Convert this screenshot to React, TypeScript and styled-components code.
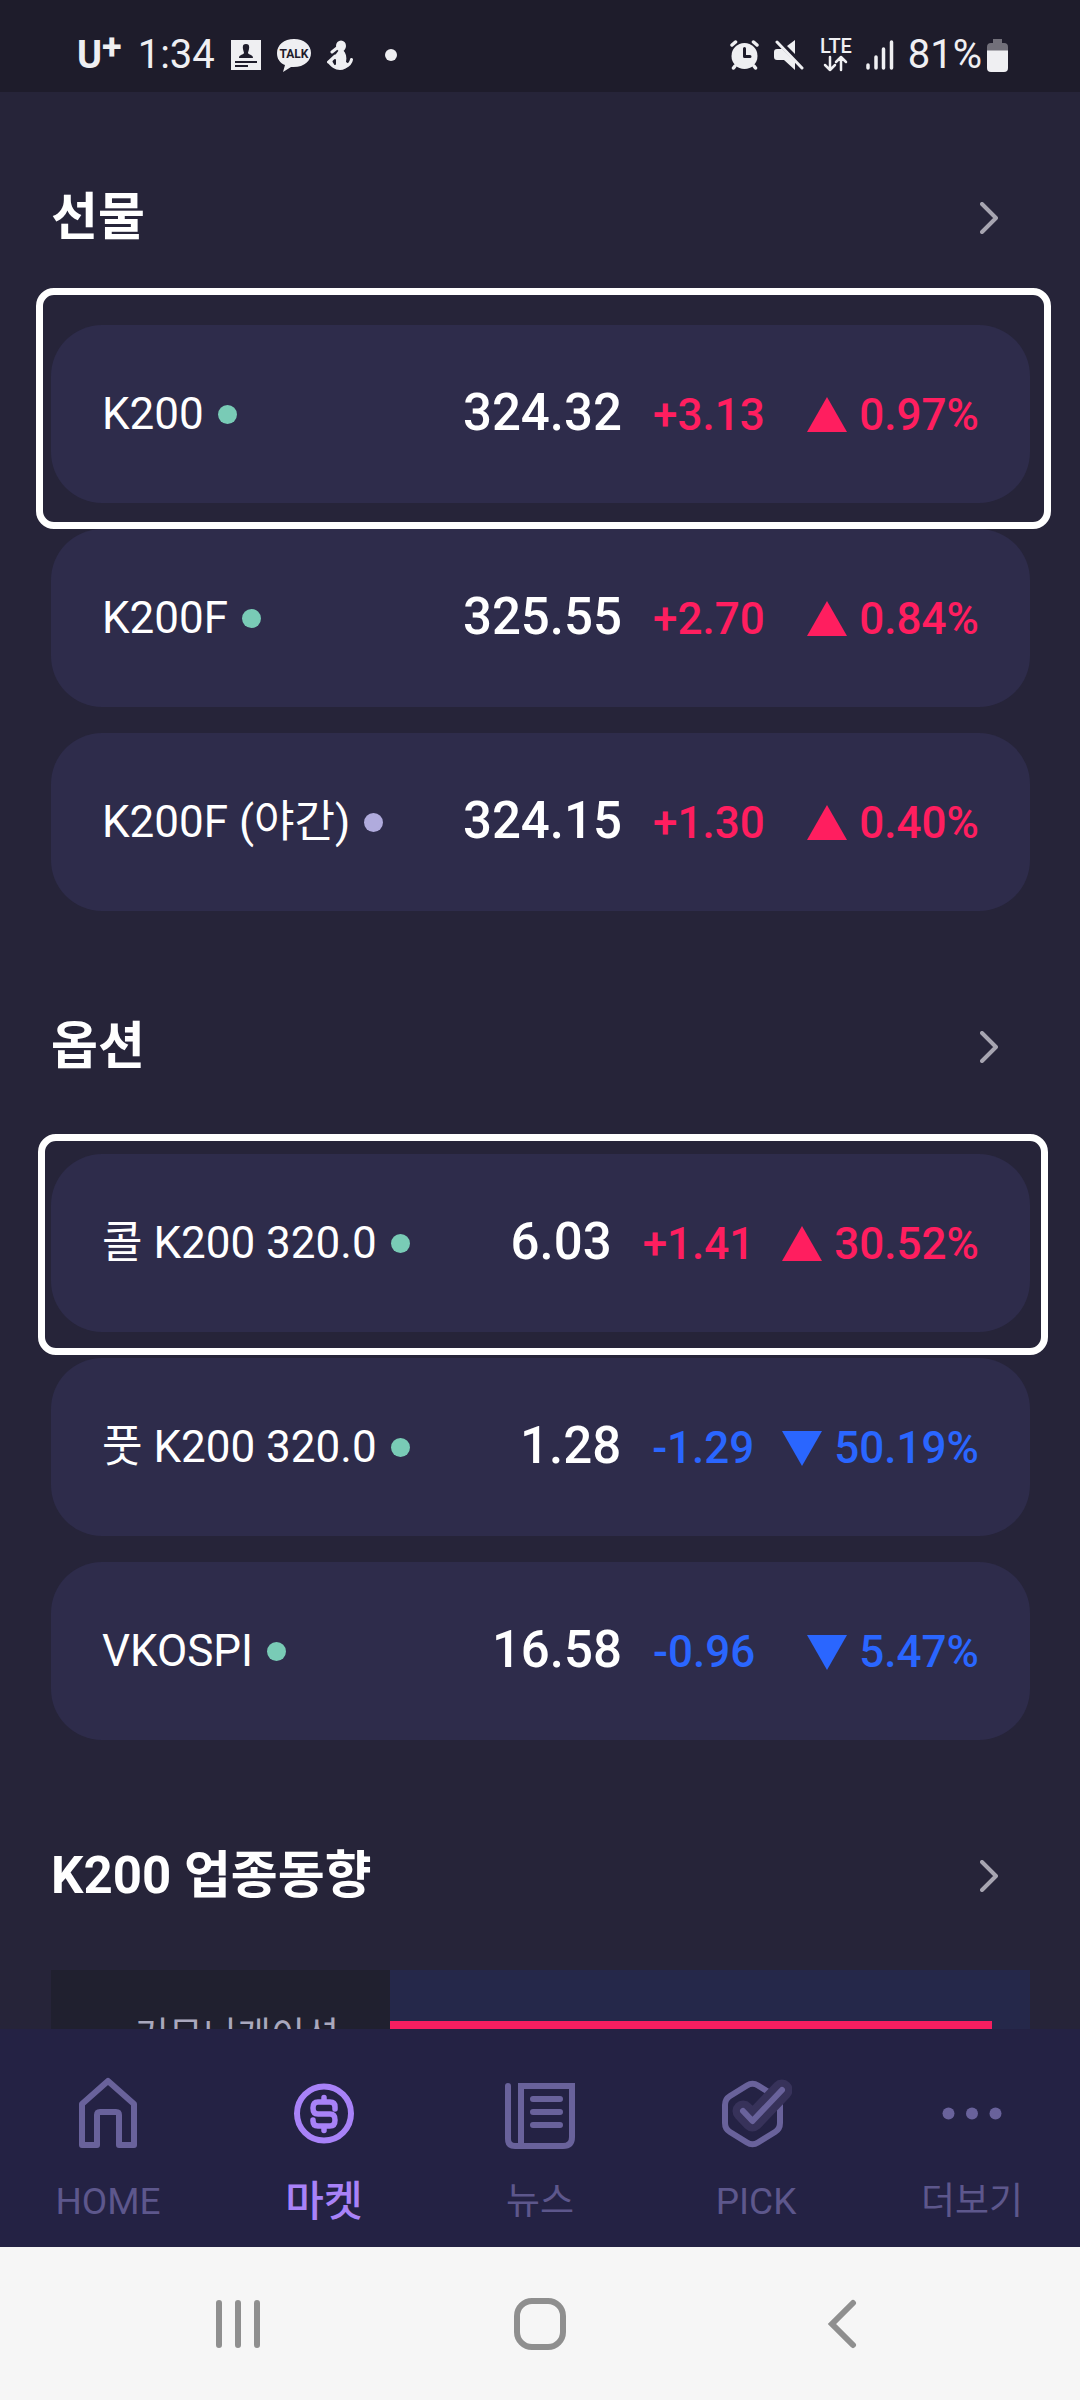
import React from "react";
import styled, { createGlobalStyle } from "styled-components";

const color = {
  page: "#262439",
  status: "#1e1c2b",
  card: "#2e2c4b",
  nav: "#242244",
  up: "#ff1e5f",
  down: "#2a66ff",
  open: "#79cbb6",
  night: "#b0abdd",
  muted: "#5d578c",
  mutedIcon: "#69629b",
  active: "#a882f8",
  statusInk: "#efeff2",
};

const GlobalStyle = createGlobalStyle`
  *, *::before, *::after { box-sizing: border-box; }
  body {
    margin: 0;
    background: ${color.page};
    color: #fff;
    font-family: Roboto, "Noto Sans CJK KR", sans-serif;
  }
  h2, ul { margin: 0; padding: 0; }
  ul { list-style: none; }
  a { color: inherit; text-decoration: none; }
  button { border: 0; padding: 0; background: none; cursor: pointer; }
  svg { display: block; flex: none; }
`;

const Screen = styled.div`
  display: flex;
  flex-direction: column;
  height: 100vh;
`;

/* Status bar */

const StatusBar = styled.header`
  flex: none;
  display: flex;
  align-items: center;
  justify-content: space-between;
  height: 92px;
  padding: 18px 72px 0 77px;
  background: ${color.status};
  color: ${color.statusInk};
  font-size: 40px;
  line-height: 48px;
`;

const StatusGroup = styled.div<{ $gap: number }>`
  display: flex;
  align-items: center;
  gap: ${(p) => p.$gap}px;
`;

const Carrier = styled.span`
  display: flex;
  font-size: 38px;
  line-height: 48px;
  font-weight: 700;

  sup {
    font-size: 36px;
    line-height: 32px;
  }
`;

/* Market content */

const Content = styled.main`
  flex: 1;
  min-height: 0;
  overflow-y: auto;
  scrollbar-width: none;
  padding: 96px 50px 0 51px;
`;

const Section = styled.section`
  & + & { margin-top: 106px; }
`;

const SectionHead = styled.div<{ $space: number }>`
  display: flex;
  align-items: center;
  justify-content: space-between;
  height: 60px;
  margin-bottom: ${(p) => p.$space}px;
`;

const SectionTitle = styled.h2`
  font-size: 51px;
  line-height: 60px;
  font-weight: 700;
`;

const MoreButton = styled.button`
  display: flex;
  align-items: center;
  justify-content: center;
  width: 82px;
  height: 60px;
  color: #a7a5b1;
`;

const CardList = styled.ul`
  display: flex;
  flex-direction: column;
  gap: 26px;
`;

const CardItem = styled.li`
  position: relative;
`;

const Card = styled.a`
  display: flex;
  align-items: center;
  justify-content: space-between;
  height: 178px;
  padding: 0 51px;
  border-radius: 51px;
  background: ${color.card};
  font-size: 44px;
  line-height: 60px;
  white-space: nowrap;
`;

/* White marker drawn over the list, around one card */
const Marker = styled.span<{ $inset: string }>`
  position: absolute;
  inset: ${(p) => p.$inset};
  z-index: 1;
  border: 7px solid #fff;
  border-radius: 18px;
  pointer-events: none;
`;

const Name = styled.span`
  display: flex;
  align-items: center;
  gap: 14px;
`;

const Dot = styled.i<{ $color: string; $size: number }>`
  width: ${(p) => p.$size}px;
  height: ${(p) => p.$size}px;
  border-radius: 50%;
  background: ${(p) => p.$color};
`;

const Quote = styled.span`
  display: flex;
  align-items: baseline;
  gap: 31px;
  font-weight: 500;
`;

const Price = styled.strong`
  font-size: 51px;
  font-weight: 500;
`;

const Move = styled.span<{ $up: boolean }>`
  display: flex;
  justify-content: space-between;
  gap: 28px;
  min-width: 326px;
  color: ${(p) => (p.$up ? color.up : color.down)};
`;

const Rate = styled.span`
  display: flex;
  align-items: center;
  gap: 12px;
`;

/* Sector chart */

const SectorRow = styled.div`
  display: grid;
  grid-template-columns: 339px 1fr;
  height: 134px;
`;

const SectorName = styled.span`
  padding-right: 51px;
  background: #20202f;
  color: #a9a8bd;
  font-size: 37px;
  line-height: 134px;
  text-align: right;
`;

const SectorTrack = styled.div`
  display: flex;
  align-items: center;
  background: #25284a;
`;

const SectorBar = styled.div`
  height: 32px;
  background: #f61e60;
`;

/* Tab bar */

const TabBar = styled.nav`
  flex: none;
  display: grid;
  grid-template-columns: repeat(5, 1fr);
  padding: 48px 0 21px;
  background: ${color.nav};
`;

const Tab = styled.a<{ $active?: boolean }>`
  display: flex;
  flex-direction: column;
  align-items: center;
  gap: 29px;
  color: ${(p) => (p.$active ? color.active : color.mutedIcon)};
`;

const TabLabel = styled.span<{ $active?: boolean }>`
  color: ${(p) => (p.$active ? color.active : color.muted)};
  font-size: ${(p) => (p.$active ? 42 : 37)}px;
  font-weight: ${(p) => (p.$active ? 500 : 400)};
  line-height: 48px;
`;

/* System navigation */

const SystemBar = styled.nav`
  flex: none;
  display: flex;
  align-items: center;
  justify-content: space-around;
  height: 153px;
  padding: 0 8%;
  background: #f6f6f6;
  color: #8f8f8f;
`;

const SystemButton = styled.button`
  display: flex;
  align-items: center;
  justify-content: center;
  width: 96px;
  height: 96px;
  color: inherit;
`;

/* Icons */

const ContactIcon = () => (
  <svg width="30" height="30" viewBox="0 0 30 30" fill="currentColor" aria-hidden="true">
    <path
      fillRule="evenodd"
      d="M0 0H30V30H0ZM15 4C12 4 11.500 6 12 9C12.300 11 13 12 13 13C12 15 8 14.500 8 18H22C22 14.500 18 15 17 13C17 12 17.700 11 18 9C18.500 6 18 4 15 4ZM4 21V23H26V21ZM4 25V27H17V25Z"
    />
  </svg>
);

const TalkIcon = () => (
  <svg width="34" height="33" viewBox="0 0 34 33" aria-hidden="true">
    <path
      fill="currentColor"
      d="M17 0C7 0 0 6 0 14C0 20 3 24 8 26L6 33L14 28C27 29 34 22 34 14C34 6 27 0 17 0Z"
    />
    <text x="17" y="19" textAnchor="middle" fontSize="12" fontWeight="700" fontFamily="Roboto, sans-serif" fill={color.status}>
      TALK
    </text>
  </svg>
);

const FigureIcon = () => (
  <svg width="42" height="31" viewBox="0 0 42 31" fill="none" stroke="currentColor" strokeLinecap="round" strokeLinejoin="round" aria-hidden="true">
    <ellipse cx="14" cy="6" rx="5" ry="5.500" fill="currentColor" stroke="none" />
    <path fill="currentColor" stroke="none" d="M12 10H16C19 13 20 17 19 22L22 24C20 28 17 30 13 30C8 30 4 27 1 23L9 14Z" />
    <path strokeWidth="3" d="M5 12L10 8M1.500 22L8 16M18 27C22 25 24 23 24.500 19.500" />
    <path stroke={color.status} strokeWidth="2" d="M6.500 21.500L8 24V20Z" />
  </svg>
);

const AlarmIcon = () => (
  <svg width="30" height="30" viewBox="0 0 30 30" fill="none" strokeLinecap="round" aria-hidden="true">
    <circle cx="14.500" cy="16" r="13" fill="currentColor" />
    <path stroke="currentColor" strokeWidth="3.500" d="M2 5L5.500 2M27 5L23.500 2M5 26L3.500 28M24 26L25.500 28" />
    <path stroke={color.status} strokeWidth="3" strokeLinejoin="round" d="M14.500 8.500V16.500H20" />
  </svg>
);

const MuteIcon = () => (
  <svg width="32" height="30" viewBox="0 0 32 30" fill="currentColor" aria-hidden="true">
    <path d="M3 9H8L21 22V30L10 20H3Q0 20 0 17V12Q0 9 3 9ZM13 6L21 0V14Z" />
    <path stroke="currentColor" strokeWidth="3" strokeLinecap="round" d="M3 2L28 28" />
  </svg>
);

const LteIcon = () => (
  <svg width="32" height="34" viewBox="0 0 32 34" fill="none" overflow="visible" aria-hidden="true">
    <text x="16" y="15" textAnchor="middle" fontSize="20" fontWeight="500" fontFamily="Roboto, sans-serif" fill="currentColor">
      LTE
    </text>
    <path stroke="currentColor" strokeWidth="2.500" strokeLinecap="round" strokeLinejoin="round" d="M10 19V32M5 27L10 32L15 27M21 32V19M16 24L21 19L26 24" />
  </svg>
);

const SignalIcon = () => (
  <svg width="28" height="30" viewBox="0 0 28 30" stroke="currentColor" strokeWidth="3.500" strokeLinecap="round" aria-hidden="true">
    <path d="M2 25V28M10 17V28M17.500 9V28M25.500 2V28" />
  </svg>
);

const BatteryIcon = () => (
  <svg width="21" height="33" viewBox="0 0 21 33" fill="currentColor" aria-hidden="true">
    <path opacity="0.400" d="M6 0H15V4H17Q21 4 21 8V12H0V8Q0 4 4 4H6Z" />
    <path d="M0 11.500H21V29Q21 33 17 33H4Q0 33 0 29Z" />
  </svg>
);

const ChevronIcon = () => (
  <svg width="18" height="32" viewBox="0 0 18 32" fill="none" stroke="currentColor" strokeWidth="4" strokeLinecap="round" strokeLinejoin="round" aria-hidden="true">
    <path d="M2 2L16 16L2 30" />
  </svg>
);

const Triangle = ({ up }: { up: boolean }) => (
  <svg width="40" height="36" viewBox="0 0 40 36" fill="currentColor" aria-hidden="true">
    <path d={up ? "M20 0L40 35H0Z" : "M0 1H40L20 36Z"} />
  </svg>
);

const TabSvg = ({ children }: { children: React.ReactNode }) => (
  <svg width="72" height="72" viewBox="0 0 72 72" fill="none" stroke="currentColor" strokeWidth="6" strokeLinecap="round" strokeLinejoin="round" aria-hidden="true">
    {children}
  </svg>
);

const HomeIcon = () => (
  <TabSvg>
    <path d="M36 4L62 27V68H47V38Q47 35 44 35H28Q25 35 25 38V68H10V27Z" />
  </TabSvg>
);

const MarketIcon = () => (
  <TabSvg>
    <circle cx="36" cy="36.500" r="27" />
    <path strokeWidth="5.500" d="M36 20.500V25M36 49V53.500M47 32V30Q47 25 42 25H30Q25 25 25 31Q25 37 30 37H42Q47 37 47 43Q47 49 42 49H30Q25 49 25 44V43" />
  </TabSvg>
);

const NewsIcon = () => (
  <TabSvg>
    <path strokeLinejoin="miter" d="M17 67V9H68V60Q68 69 59 69H11Q4 69 4 62V9" />
    <path d="M29 22H56M29 35H56M29 48H56" />
  </TabSvg>
);

const PickIcon = () => (
  <TabSvg>
    <path d="M27 8.500Q32.500 5 38 8.500L55 19Q60 22 60 28V46Q60 52 55 55L38 65.500Q32.500 69 27 65.500L10 55Q5 52 5 46V28Q5 22 10 19Z" />
    <path stroke="#37325a" strokeWidth="21" d="M23 34L32.500 44L62 13" />
    <path strokeWidth="6" d="M23 34L32.500 44L62 13" />
  </TabSvg>
);

const MoreIcon = () => (
  <TabSvg>
    <g fill="currentColor" stroke="none">
      <circle cx="12.500" cy="36.500" r="6" />
      <circle cx="36" cy="36.500" r="6" />
      <circle cx="59.500" cy="36.500" r="6" />
    </g>
  </TabSvg>
);

/* Data */

type Instrument = {
  name: string;
  price: string;
  change: string;
  rate: string;
  night?: boolean;
  marker?: string;
};

const sections: { title: string; rows: Instrument[] }[] = [
  {
    title: "선물",
    rows: [
      { name: "K200", price: "324.32", change: "+3.13", rate: "0.97%", marker: "-37px -21px -26px -15px" },
      { name: "K200F", price: "325.55", change: "+2.70", rate: "0.84%" },
      { name: "K200F (야간)", price: "324.15", change: "+1.30", rate: "0.40%", night: true },
    ],
  },
  {
    title: "옵션",
    rows: [
      { name: "콜 K200 320.0", price: "6.03", change: "+1.41", rate: "30.52%", marker: "-20px -18px -23px -13px" },
      { name: "풋 K200 320.0", price: "1.28", change: "-1.29", rate: "50.19%" },
      { name: "VKOSPI", price: "16.58", change: "-0.96", rate: "5.47%" },
    ],
  },
];

const tabs = [
  { label: "HOME", Icon: HomeIcon },
  { label: "마켓", Icon: MarketIcon, active: true },
  { label: "뉴스", Icon: NewsIcon },
  { label: "PICK", Icon: PickIcon },
  { label: "더보기", Icon: MoreIcon },
];

const Head = ({ title, space }: { title: string; space: number }) => (
  <SectionHead $space={space}>
    <SectionTitle>{title}</SectionTitle>
    <MoreButton type="button" aria-label={title}>
      <ChevronIcon />
    </MoreButton>
  </SectionHead>
);

const InstrumentCard = ({ row }: { row: Instrument }) => {
  const up = row.change.startsWith("+");
  return (
    <CardItem>
      <Card href="#">
        <Name>
          {row.name}
          <Dot $size={19} $color={row.night ? color.night : color.open} />
        </Name>
        <Quote>
          <Price>{row.price}</Price>
          <Move $up={up}>
            <span>{row.change}</span>
            <Rate>
              <Triangle up={up} />
              {row.rate}
            </Rate>
          </Move>
        </Quote>
      </Card>
      {row.marker && <Marker $inset={row.marker} />}
    </CardItem>
  );
};

export default function App() {
  return (
    <Screen>
      <GlobalStyle />
      <StatusBar>
        <StatusGroup $gap={16}>
          <Carrier>
            U<sup>+</sup>
          </Carrier>
          <span>1:34</span>
          <ContactIcon />
          <TalkIcon />
          <FigureIcon />
          <Dot $size={12} $color={color.statusInk} />
        </StatusGroup>
        <StatusGroup $gap={14}>
          <AlarmIcon />
          <MuteIcon />
          <LteIcon />
          <SignalIcon />
          <StatusGroup $gap={5}>
            <span>81%</span>
            <BatteryIcon />
          </StatusGroup>
        </StatusGroup>
      </StatusBar>

      <Content>
        {sections.map((section) => (
          <Section key={section.title}>
            <Head title={section.title} space={77} />
            <CardList>
              {section.rows.map((row) => (
                <InstrumentCard key={row.name} row={row} />
              ))}
            </CardList>
          </Section>
        ))}
        <Section>
          <Head title="K200 업종동향" space={64} />
          <SectorRow>
            <SectorName>커뮤니케이션</SectorName>
            <SectorTrack>
              <SectorBar style={{ width: "94%" }} />
            </SectorTrack>
          </SectorRow>
        </Section>
      </Content>

      <TabBar>
        {tabs.map(({ label, Icon, active }) => (
          <Tab key={label} href="#" $active={active}>
            <Icon />
            <TabLabel $active={active}>{label}</TabLabel>
          </Tab>
        ))}
      </TabBar>

      <SystemBar>
        <SystemButton type="button" aria-label="Recents">
          <svg width="46" height="50" viewBox="0 0 46 50" stroke="currentColor" strokeWidth="6" strokeLinecap="round">
            <path d="M4 4V46M23 4V46M42 4V46" />
          </svg>
        </SystemButton>
        <SystemButton type="button" aria-label="Home">
          <svg width="52" height="52" viewBox="0 0 52 52" fill="none" stroke="currentColor" strokeWidth="6">
            <rect x="3" y="3" width="46" height="46" rx="15" />
          </svg>
        </SystemButton>
        <SystemButton type="button" aria-label="Back">
          <svg width="30" height="50" viewBox="0 0 30 50" fill="none" stroke="currentColor" strokeWidth="6" strokeLinecap="round">
            <path d="M26 4L5 25L26 46" />
          </svg>
        </SystemButton>
      </SystemBar>
    </Screen>
  );
}
